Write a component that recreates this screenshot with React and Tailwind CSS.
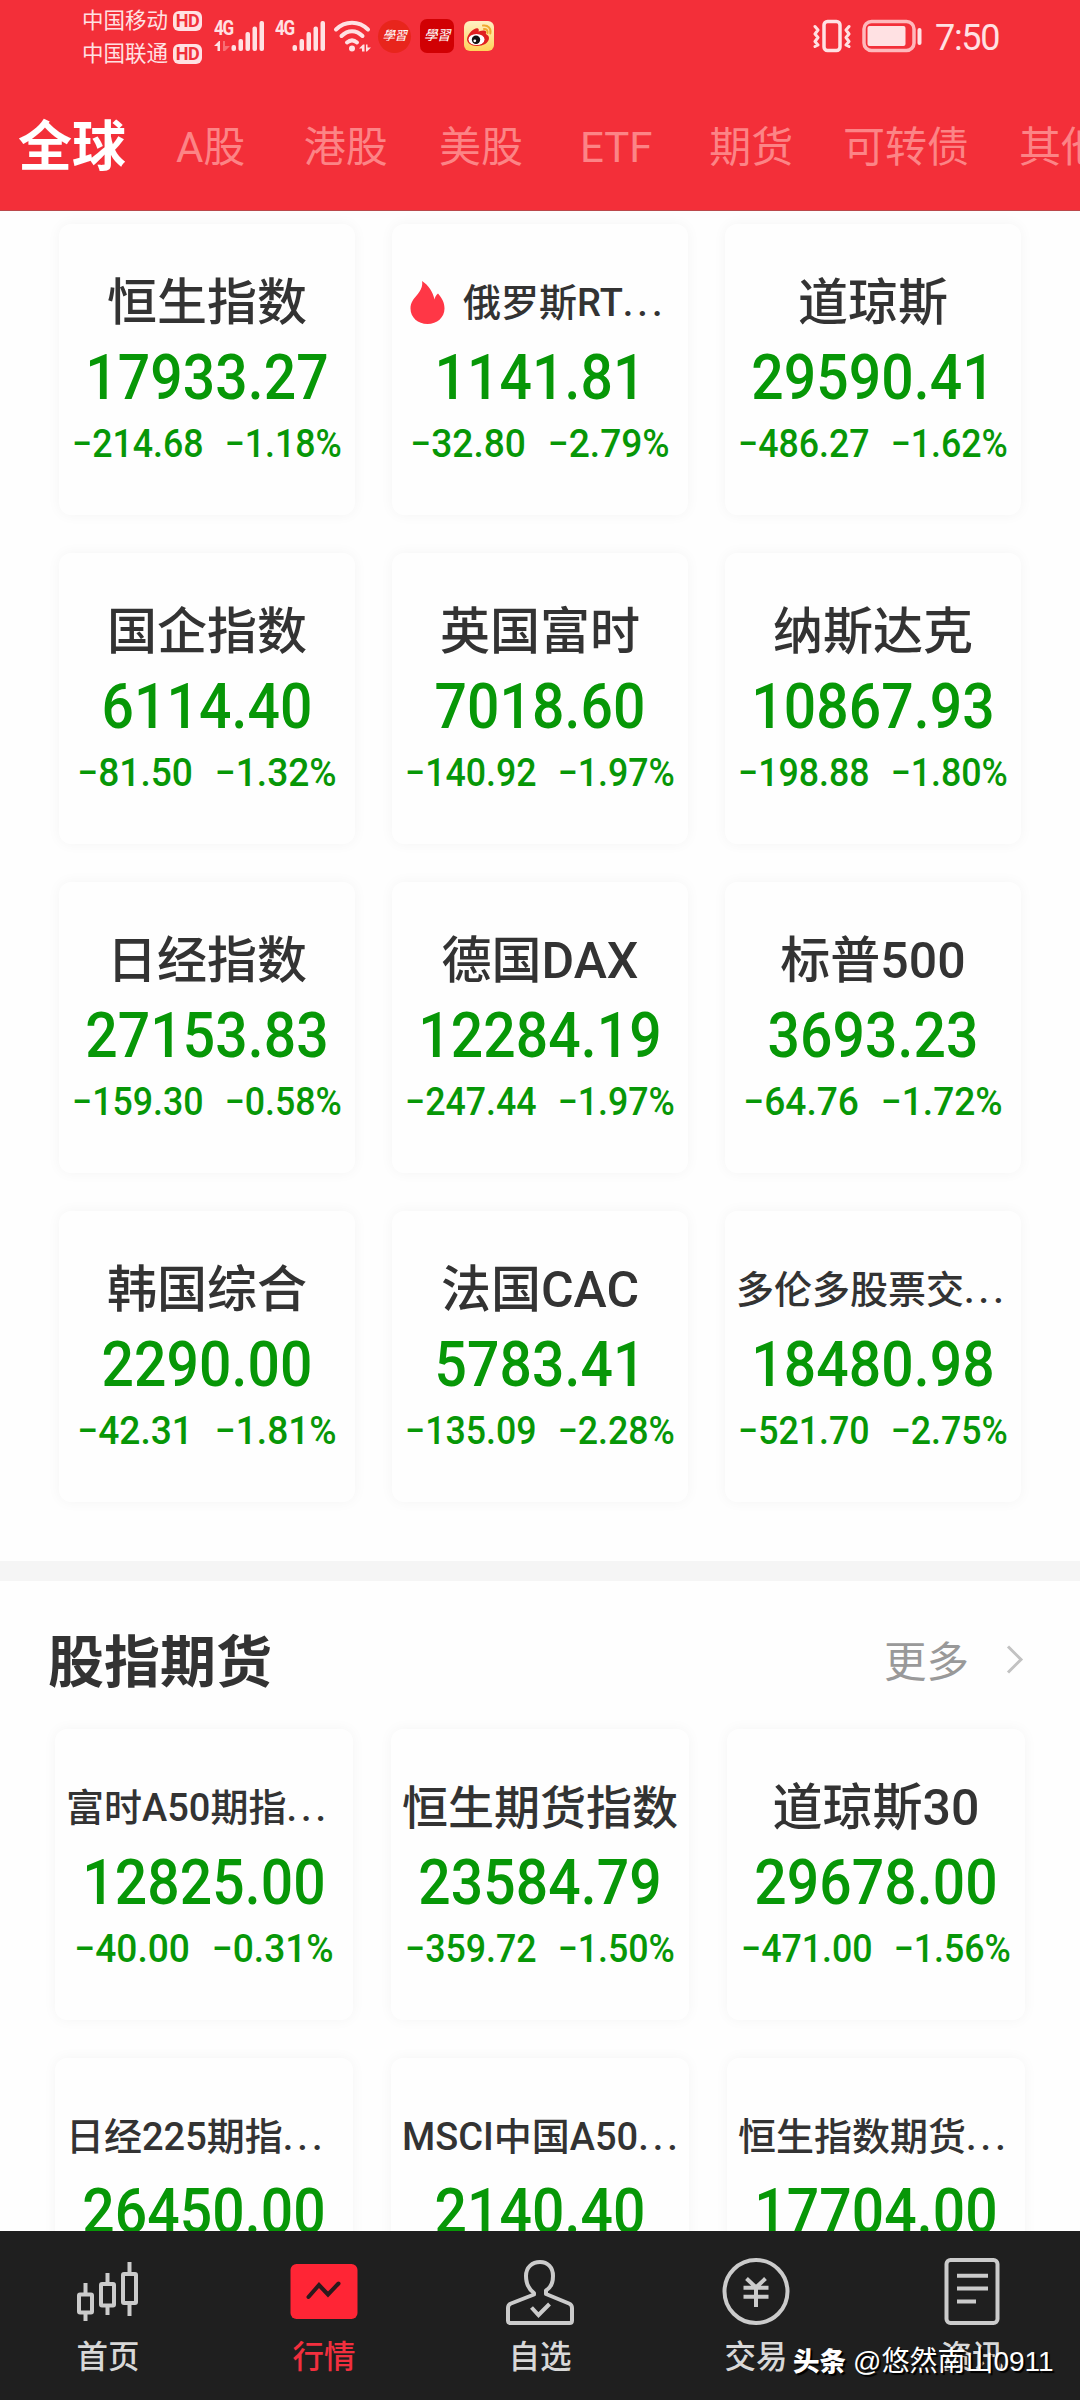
import React from 'react';

const TABS = ['A股', '港股', '美股', 'ETF', '期货'];

const GLOBAL_INDEXES = [
    { name: '恒生指数', price: '17933.27', change: '−214.68', percent: '−1.18%' },
    { name: '俄罗斯RT', price: '1141.81', change: '−32.80', percent: '−2.79%', small: true, hot: true },
    { name: '道琼斯', price: '29590.41', change: '−486.27', percent: '−1.62%' },
    { name: '国企指数', price: '6114.40', change: '−81.50', percent: '−1.32%' },
    { name: '英国富时', price: '7018.60', change: '−140.92', percent: '−1.97%' },
    { name: '纳斯达克', price: '10867.93', change: '−198.88', percent: '−1.80%' },
    { name: '日经指数', price: '27153.83', change: '−159.30', percent: '−0.58%' },
    { name: '德国DAX', price: '12284.19', change: '−247.44', percent: '−1.97%' },
    { name: '标普500', price: '3693.23', change: '−64.76', percent: '−1.72%' },
    { name: '韩国综合', price: '2290.00', change: '−42.31', percent: '−1.81%' },
    { name: '法国CAC', price: '5783.41', change: '−135.09', percent: '−2.28%' },
    { name: '多伦多股票交', price: '18480.98', change: '−521.70', percent: '−2.75%', small: true },
];

const FUTURES = [
    { name: '富时A50期指', price: '12825.00', change: '−40.00', percent: '−0.31%', small: true },
    { name: '恒生期货指数', price: '23584.79', change: '−359.72', percent: '−1.50%', fit: true },
    { name: '道琼斯30', price: '29678.00', change: '−471.00', percent: '−1.56%' },
    { name: '日经225期指', price: '26450.00', small: true },
    { name: 'MSCI中国A50', price: '2140.40', small: true },
    { name: '恒生指数期货', price: '17704.00', small: true },
];

const Carrier = ({ name }) => (
    <div className="flex items-center gap-[5px] h-[33px]">
        <span className="text-[21.5px] leading-[33px] whitespace-nowrap">{name}</span>
        <span className="w-[29px] h-[20px] rounded-[6px] bg-[#ffe1e3] text-[#f03039] text-[18px] leading-[20px] font-bold text-center tracking-[-0.5px]">HD</span>
    </div>
);

const Signal = ({ arrows }) => (
    <div className="relative w-[52px] h-[32px]">
        <span className="absolute left-0 top-0 origin-left scale-x-[0.85] text-[20px] leading-[17px] font-bold tracking-[-1.5px]">4G</span>
        <svg width="52" height="32" viewBox="0 0 52 32" fill="currentColor">
            {arrows && <path d="M0 26l5-5h1v10H3.500v-5z" />}
            {arrows && <path d="M9 21h2v5h5l-5 5H9z" opacity=".35" />}
            <rect x="17.500" y="25" width="4.500" height="6" rx="2" />
            <rect x="24.500" y="19" width="4.500" height="12" rx="2" />
            <rect x="31.500" y="12" width="4.500" height="19" rx="2" />
            <rect x="38.500" y="6.500" width="4.500" height="24.500" rx="2" />
            <rect x="45.500" y="1" width="4.500" height="30" rx="2" />
        </svg>
    </div>
);

const WeiboIcon = () => (
    <svg className="ml-[10px]" width="30" height="30" viewBox="0 0 30 30">
        <defs>
            <linearGradient id="weibo" x1="0" y1="0" x2="0" y2="1">
                <stop offset="0" stopColor="#fff0c4" />
                <stop offset="1" stopColor="#ffd35a" />
            </linearGradient>
        </defs>
        <rect width="30" height="30" rx="6" fill="url(#weibo)" />
        <path d="M3 18C4 12 11 6 14 7.500c1.500 1 .5 3 .5 3s6-2.500 7.500 0c.6 1.500-.3 2.500-.3 2.500s3.300 1 3.300 4c0 5-6 8-12 8S3 22 3 18z" fill="#e02020" />
        <ellipse cx="12.500" cy="18.500" rx="8" ry="5.500" fill="#fff" />
        <circle cx="12" cy="18.800" r="4.200" fill="#111" />
        <circle cx="10.800" cy="19.800" r="1.400" fill="#fff" />
        <path d="M19 4.500c5-.8 8.500 3 7.300 8M20 8c2.500-.2 4 1.500 3.500 4" fill="none" stroke="#f0a830" strokeWidth="2" strokeLinecap="round" />
    </svg>
);

const StatusBar = () => (
    <div className="flex items-center h-[72px] pl-[82px] pr-[79px] text-[#ffe1e3]">
        <div className="w-[132px] pt-[2px]">
            <Carrier name="中国移动" />
            <Carrier name="中国联通" />
        </div>
        <Signal arrows />
        <div className="w-[9px]" />
        <Signal />
        <svg className="ml-[6px]" width="38" height="32" viewBox="0 0 38 32" fill="none" stroke="currentColor" strokeWidth="4" strokeLinecap="round">
            <path d="M3 9.500C12 .5 26 .5 35 9.500" />
            <path d="M8.500 16C15 9.500 23 9.500 29.500 16" />
            <path d="M14 22.500c3.500-3 6.500-3 10 0" />
            <circle cx="19" cy="28.500" r="3" fill="currentColor" stroke="none" />
            <path d="M26 28.500l4-4h1.500v7H29v-3zM33 24.500h1.500v3H38l-4 4h-1z" fill="currentColor" stroke="none" />
        </svg>
        <div className="ml-[7px] w-[33px] h-[33px] rounded-full bg-[#e8251c] text-[12.500px] leading-[32px] text-center italic text-white -tracking-[0.5px]">學習</div>
        <div className="ml-[9px] w-[34px] h-[34px] rounded-[7px] bg-[#d10003] text-[13.500px] leading-[33px] text-center italic text-white -tracking-[0.5px]">學習</div>
        <WeiboIcon />
        <svg className="ml-auto" width="38" height="34" viewBox="0 0 38 34" fill="none" stroke="currentColor" strokeWidth="3" strokeLinecap="round" strokeLinejoin="round">
            <rect x="11" y="2.500" width="16" height="29" rx="3.500" strokeWidth="3.500" />
            <path d="M2 7.500l3 3.500-3 4 3 3.500-3 4 3 3.500-3 1.500M36 7.500L33 11l3 4-3 3.500 3 4-3 3.500 3 1.500" />
        </svg>
        <svg className="ml-[11px]" width="61" height="34" viewBox="0 0 61 34" fill="none">
            <rect x="2" y="2.500" width="50" height="29" rx="7.500" stroke="#ffb9bc" strokeWidth="3.500" />
            <rect x="5.500" y="7" width="38" height="20" rx="2" fill="currentColor" />
            <rect x="55.500" y="9" width="4" height="17" rx="2" fill="currentColor" />
        </svg>
        <span className="ml-[12px] w-[66px] text-[36px] leading-[40px] pt-[3px] tracking-[-1.3px]">7:50</span>
    </div>
);

const Header = () => (
    <header className="h-[211px] shrink-0 bg-[#f32f39] border-b border-[#bb484b]">
        <StatusBar />
        <nav className="flex items-center mt-[41px] h-[68px] pl-[18px] overflow-hidden whitespace-nowrap text-[42px] text-[#fc8486]">
            <span className="w-[125px] shrink-0 text-[54px] leading-[68px] pt-px font-bold text-white">全球</span>
            {TABS.map((tab) => (
                <span key={tab} className="w-[135.2px] shrink-0 text-center">{tab}</span>
            ))}
            <span className="w-[174px] shrink-0 text-center">可转债</span>
            <span className="w-[136px] shrink-0 text-center">其他</span>
        </nav>
    </header>
);

const Flame = () => (
    <svg className="shrink-0 mr-[18px]" width="35" height="44" viewBox="0 0 35 44">
        <path d="M12 0c1 5-1 9-5 14C3 18.500.5 22 .5 27.500.5 36.500 8 43 17.500 43s17-6.500 17-15.500c0-6-2.500-10.500-6.500-15-2 1.500-3 3.500-3.500 6C23 11 18.500 4 12 0z" fill="#ff3746" />
    </svg>
);

const titleClass = ({ small, fit }) => {
    if (small) return 'text-[38px] justify-start';
    if (fit) return 'text-[46px] justify-center';
    return 'text-[50px] justify-center';
};

const changeClass = ({ change }) => (change.length > 6 ? 'scale-x-[0.916]' : 'scale-x-[0.952]');

const QuoteCard = ({ item }) => (
    <div className="h-[291px] px-[11px] pt-[48px] rounded-[12px] bg-[#fefefe] shadow-[0_0_14px_rgba(0,0,0,0.045)]">
        <div className={`flex items-center h-[62px] whitespace-nowrap font-medium text-[#333] ${titleClass(item)}`}>
            {item.hot && <span className="w-[7px]" />}
            {item.hot && <Flame />}
            <span>{item.name}</span>
            {item.small && <span className="tracking-[4px]">...</span>}
        </div>
        <div className="h-[87px] scale-x-[0.905] text-center text-[63px] leading-[87px] font-medium tracking-[0.1px] text-[#079707]">{item.price}</div>
        {item.change && (
            <div className={`flex justify-center gap-[23px] -mx-[20px] h-[46px] text-[39px] leading-[46px] font-medium text-[#079707] ${changeClass(item)}`}>
                <span>{item.change}</span>
                <span>{item.percent}</span>
            </div>
        )}
    </div>
);

const ICONS = {
    home: (
        <>
            <path d="M11.500 25v10M11.500 56v7M33.500 15v10M33.500 49v8M55.500 4v11M55.500 46v12" />
            <rect x="5" y="36.500" width="13" height="18" rx="1" />
            <rect x="27" y="26" width="13" height="21.500" rx="1" />
            <rect x="49" y="16" width="13" height="29" rx="1" />
        </>
    ),
    market: (
        <>
            <rect x="0.500" y="6" width="67" height="55" rx="6" fill="#ff2535" stroke="none" />
            <path d="M18.500 39L29 27l9 9.500L48.500 25.500" stroke="#2b1a1c" strokeLinecap="round" />
        </>
    ),
    watch: (
        <>
            <path d="M28 36.500L5 45.500Q2 46.700 2 50v12.500Q2 65 4.500 65h59q2.500 0 2.500-2.500V50q0-3.300-3-4.500l-23-9.500v-3.500c5-3 7-8 7-14.500C47 9 41.500 4 34 4S20 9 20 18c0 7 2.500 13 8 17z" strokeLinejoin="round" />
            <path d="M25.500 49.500l7 7.500 11-11" />
        </>
    ),
    trade: (
        <>
            <circle cx="34" cy="33.500" r="31.500" />
            <path d="M24.500 20.500l9.500 9 9.500-9M21.500 29.700h25M21.500 38.700h25M34 29v20" />
        </>
    ),
    news: (
        <>
            <rect x="8.500" y="2" width="51" height="63" rx="4" />
            <path d="M19 17.700h31M19 30.500h31M19 43.500h19" />
        </>
    ),
};

const NAV = [
    { id: 'home', label: '首页' },
    { id: 'market', label: '行情', active: true },
    { id: 'watch', label: '自选' },
    { id: 'trade', label: '交易' },
    { id: 'news', label: '资讯' },
];

const BottomNav = () => (
    <footer className="relative grid grid-cols-5 h-[169px] shrink-0 bg-[#1f1f1f]">
        {NAV.map((item) => (
            <div key={item.id} className="flex flex-col items-center pt-[27px]">
                <svg width="68" height="68" viewBox="0 0 68 68" fill="none" stroke="#cbcbcb" strokeWidth="4">
                    {ICONS[item.id]}
                </svg>
                <span className={`mt-[15px] text-[31.5px] leading-[34px] font-medium ${item.active ? 'text-[#f22f3e]' : 'text-[#d8d8d8]'}`}>{item.label}</span>
            </div>
        ))}
        <div className="absolute left-[793px] top-[114px] flex items-center h-[34px] whitespace-nowrap text-white [text-shadow:2px_2px_1px_#000]">
            <span className="w-[60px] text-[26.5px] font-black">头条</span>
            <span className="font-['Liberation_Sans','Noto_Sans_CJK_SC',sans-serif] text-[28px]">@悠然南山0911</span>
        </div>
    </footer>
);

export default function App() {
    return (
        <div className="flex flex-col w-[1080px] h-[2400px] overflow-hidden bg-[#fefefe] font-['Roboto','Noto_Sans_CJK_SC',sans-serif]">
            <Header />
            <main className="flex-1 min-h-0 overflow-hidden">
                <section className="grid grid-cols-[repeat(3,296px)] gap-x-[37px] gap-y-[38px] pl-[59px] pt-[13px] pb-[59px]">
                    {GLOBAL_INDEXES.map((item) => (
                        <QuoteCard key={item.name} item={item} />
                    ))}
                </section>
                <div className="h-[20px] bg-[#f5f5f5]" />
                <section>
                    <div className="flex items-center justify-between h-[148px] pl-[48px] pr-[56px] pt-[16px]">
                        <h2 className="text-[56px] font-bold text-[#333]">股指期货</h2>
                        <div className="flex items-center text-[42.500px] text-[#999]">
                            更多
                            <svg className="ml-[35px] mb-[6px]" width="20" height="30" viewBox="0 0 20 30" fill="none" stroke="#c2c2c2" strokeWidth="3">
                                <path d="M4 1.500L17 14.500L4 27.500" />
                            </svg>
                        </div>
                    </div>
                    <div className="grid grid-cols-[repeat(3,298px)] gap-x-[38px] gap-y-[38px] pl-[55px]">
                        {FUTURES.map((item) => (
                            <QuoteCard key={item.name} item={item} />
                        ))}
                    </div>
                </section>
            </main>
            <BottomNav />
        </div>
    );
}
